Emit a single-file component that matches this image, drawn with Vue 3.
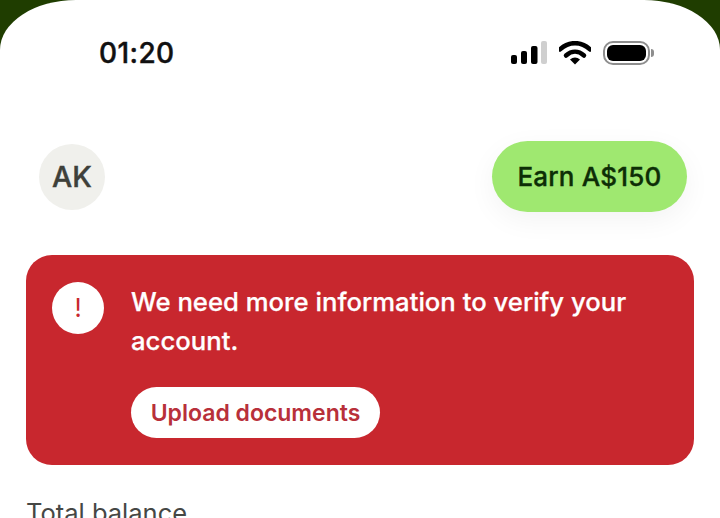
<template>
  <div class="page">
    <div class="sheet">
      <div class="status">
        <span class="time">01:20</span>
        <div class="status-icons">
          <svg class="signal" width="36" height="24" viewBox="0 0 36 24">
            <rect x="0" y="14" width="6" height="9" rx="2" fill="#000" />
            <rect x="10" y="10" width="6" height="13" rx="2" fill="#000" />
            <rect x="20" y="5" width="6.5" height="18" rx="2" fill="#000" />
            <rect x="30" y="0" width="6" height="23" rx="2" fill="#cfcfcf" />
          </svg>
          <svg class="wifi" width="32" height="24" viewBox="0 0 32 24">
            <path d="M1 8.500C9.500 0 22.500 0 31 8.500" fill="none" stroke="#000" stroke-width="4.500" stroke-linecap="round" />
            <path d="M7 14.500C12.500 9.500 19.500 9.500 25 14.500" fill="none" stroke="#000" stroke-width="4.500" stroke-linecap="round" />
            <path d="M11 18.500C14 15.800 18 15.800 21 18.500L16 23.500Z" fill="#000" />
          </svg>
          <div class="battery">
            <div class="battery-body"><div class="battery-fill" /></div>
            <div class="battery-cap" />
          </div>
        </div>
      </div>

      <div class="top-row">
        <div class="avatar">AK</div>
        <button class="earn">Earn A$150</button>
      </div>

      <div class="alert">
        <div class="alert-icon">!</div>
        <div class="alert-body">
          <p class="alert-text">We need more information to verify your account.</p>
          <button class="upload">Upload documents</button>
        </div>
      </div>

      <div class="balance-label">Total balance</div>
    </div>
  </div>
</template>

<script setup>
</script>

<style>
html, body {
  margin: 0;
  background: #fff;
}
</style>

<style scoped>
.page {
  width: 720px;
  height: 518px;
  overflow: hidden;
  position: relative;
  font-family: Inter, "Liberation Sans", sans-serif;
  background: linear-gradient(#1f3d00 0, #1f3d00 46px, #fff 76px);
}
.sheet {
  height: 518px;
  background: #fff;
  border-radius: 76px 76px 0 0 / 50px 50px 0 0;
  box-sizing: border-box;
  padding: 0 26px;
}
.status {
  height: 106px;
  padding: 0 40px 0 73px;
  display: flex;
  justify-content: space-between;
  align-items: center;
}
.time {
  font-size: 28px;
  font-weight: 500;
  color: #111;
  letter-spacing: 0.4px;
  -webkit-text-stroke: 0.4px currentColor;
}
.status-icons {
  display: flex;
  align-items: center;
  gap: 12px;
}
.battery {
  display: flex;
  align-items: center;
  gap: 1px;
}
.battery-body {
  width: 47px;
  height: 24px;
  box-sizing: border-box;
  border: 2px solid #8e8e8e;
  border-radius: 10px;
  padding: 2px;
}
.battery-fill {
  height: 100%;
  background: #000;
  border-radius: 6px;
}
.battery-cap {
  width: 3px;
  height: 8px;
  background: #8e8e8e;
  border-radius: 0 3px 3px 0;
}
.top-row {
  display: flex;
  justify-content: space-between;
  align-items: center;
  height: 71px;
  margin-top: 35px;
  padding: 0 7px 0 13px;
}
.avatar {
  width: 66px;
  height: 66px;
  border-radius: 50%;
  background: #f0f0ec;
  color: #3e403a;
  font-size: 28.500px;
  font-weight: 500;
  -webkit-text-stroke: 0.4px currentColor;
  display: flex;
  align-items: center;
  justify-content: center;
}
.earn {
  width: 195px;
  height: 71px;
  border: none;
  border-radius: 36px;
  background: #9fe870;
  color: #0d2e06;
  font-family: inherit;
  font-size: 26px;
  font-weight: 500;
  letter-spacing: 0.2px;
  -webkit-text-stroke: 0.35px currentColor;
  box-shadow: 0 8px 28px rgba(0, 0, 0, 0.05);
  padding: 0;
}
.alert {
  margin-top: 43px;
  height: 210px;
  box-sizing: border-box;
  background: #c8272e;
  border-radius: 26px;
  padding: 27px 26px;
  display: flex;
  gap: 27px;
}
.alert-icon {
  width: 52px;
  height: 52px;
  flex: none;
  border-radius: 50%;
  background: #fff;
  color: #c8272e;
  font-size: 25px;
  font-weight: 400;
  display: flex;
  align-items: center;
  justify-content: center;
}
.alert-body {
  flex: 1;
}
.alert-text {
  margin: 0;
  color: #fff;
  font-size: 25.700px;
  font-weight: 500;
  -webkit-text-stroke: 0.25px currentColor;
  line-height: 39px;
}
.upload {
  display: block;
  margin-top: 27px;
  width: 249px;
  height: 51px;
  border: none;
  border-radius: 26px;
  background: #fff;
  color: #b8303a;
  font-family: inherit;
  font-size: 23px;
  font-weight: 600;
  padding: 0;
}
.balance-label {
  margin-top: 33px;
  color: #454745;
  font-size: 25.500px;
  line-height: 30px;
}
</style>
